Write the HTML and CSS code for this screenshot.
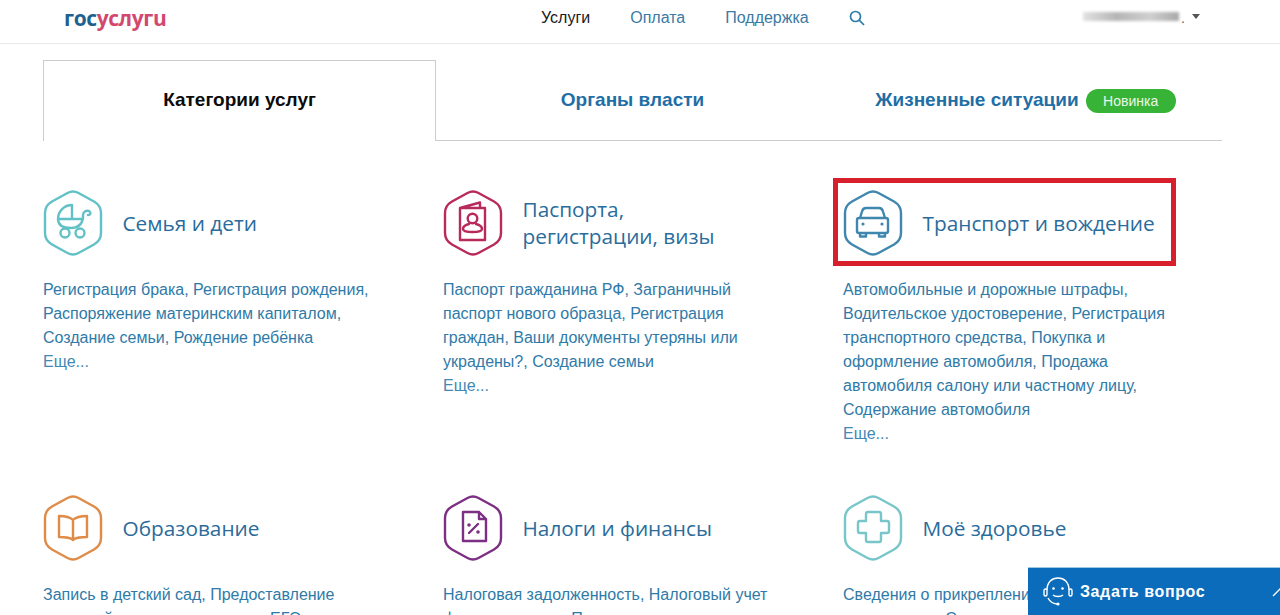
FILE: index.html
```html
<!DOCTYPE html>
<html lang="ru">
<head>
  <meta charset="UTF-8">
  <title>Госуслуги</title>
  <link rel="stylesheet" href="styles.css">
</head>
<body>
  <svg class="defs" width="0" height="0">
    <symbol id="hex" viewBox="0 0 60 66">
      <path d="M24.500 3 Q30 0 35.500 3 L51 11.500 Q58 15.500 58 23 V43 Q58 50.500 51 54.500 L35.500 63 Q30 66 24.500 63 L9 54.500 Q2 50.500 2 43 V23 Q2 15.500 9 11.500 Z"/>
    </symbol>
  </svg>

  <header class="topbar">
    <a href="#" class="logo"><span class="logo-gos">гос</span><span class="logo-usl">услугu</span></a>
    <nav class="topnav">
      <a href="#" class="current">Услуги</a>
      <a href="#">Оплата</a>
      <a href="#">Поддержка</a>
      <a href="#" class="search" aria-label="Поиск">
        <svg width="16" height="16" viewBox="0 0 16 16"><circle cx="6.500" cy="6.500" r="5"/><path d="M10.200 10.200 L15 15"/></svg>
      </a>
    </nav>
    <div class="user"><span class="user-blur"></span><span class="user-dot">.</span><span class="user-arrow"></span></div>
  </header>

  <main class="page">
    <div class="tabs">
      <a href="#" class="tab active">Категории услуг</a>
      <a href="#" class="tab">Органы власти</a>
      <a href="#" class="tab">Жизненные ситуации <span class="badge">Новинка</span></a>
    </div>

    <div class="cats">
      <section class="cat">
        <a href="#" class="cat-head">
          <svg class="icon teal" width="60" height="66" viewBox="0 0 60 66">
            <use href="#hex"/>
            <path d="M29 15 A14 14 0 0 0 15 29 H29 Z M15 29 c0 6 5 9 13 9 c7 0 11 -4 12 -10 V25 c0 -3 3 -5 6 -4 c2 1 2 4 -1 4 M29 29 H40"/>
            <circle cx="22" cy="43" r="4.500"/><circle cx="37" cy="43" r="4.500"/>
          </svg>
          <h3>Семья и дети</h3>
        </a>
        <p class="links"><a href="#">Регистрация брака</a>, <a href="#">Регистрация рождения</a>, <a href="#">Распоряжение материнским капиталом</a>, <a href="#">Создание семьи</a>, <a href="#">Рождение ребёнка</a><br><a href="#" class="more">Еще...</a></p>
      </section>

      <section class="cat">
        <a href="#" class="cat-head">
          <svg class="icon crimson" width="60" height="66" viewBox="0 0 60 66">
            <use href="#hex"/>
            <path d="M17 18 L37 12.500 V18 M17 18 H42 V50 H17 Z"/>
            <circle cx="29.500" cy="28.500" r="4.800"/>
            <path d="M26 34 c-4 1 -6 3 -6 5 c0 2 2 3 9.500 3 c7.500 0 9.500 -1 9.500 -3 c0 -2 -2 -4 -6 -5"/>
          </svg>
          <h3>Паспорта,<br>регистрации, визы</h3>
        </a>
        <p class="links"><a href="#">Паспорт гражданина РФ</a>, <a href="#">Заграничный паспорт нового образца</a>, <a href="#">Регистрация граждан</a>, <a href="#">Ваши документы утеряны или украдены?</a>, <a href="#">Создание семьи</a><br><a href="#" class="more">Еще...</a></p>
      </section>

      <section class="cat">
        <a href="#" class="cat-head">
          <svg class="icon steel" width="60" height="66" viewBox="0 0 60 66">
            <use href="#hex"/>
            <path d="M17 28 L19 21.500 c0.500 -2 2 -3.500 4 -3.500 H36 c2 0 3.500 1.500 4 3.500 L42 28 M16 28 H43 c1 0 2 1 2 2 V41 c0 1 -1 2 -2 2 H16 c-1 0 -2 -1 -2 -2 V30 c0 -1 1 -2 2 -2 Z M17 43 V46.500 H23 V43 M36 43 V46.500 H42 V43"/>
            <circle class="dot" cx="20" cy="34" r="1.600"/><circle class="dot" cx="39" cy="34" r="1.600"/>
          </svg>
          <h3>Транспорт и вождение</h3>
        </a>
        <p class="links"><a href="#">Автомобильные и дорожные штрафы</a>, <a href="#">Водительское удостоверение</a>, <a href="#">Регистрация транспортного средства</a>, <a href="#">Покупка и оформление автомобиля</a>, <a href="#">Продажа автомобиля салону или частному лицу</a>, <a href="#">Содержание автомобиля</a><br><a href="#" class="more">Еще...</a></p>
        <div class="marker"></div>
      </section>

      <section class="cat">
        <a href="#" class="cat-head">
          <svg class="icon amber" width="60" height="66" viewBox="0 0 60 66">
            <use href="#hex"/>
            <path d="M30 25 C27 22 22 21 16 21 V42 C22 42 27 42 30 45 C33 42 38 42 44 42 V21 C38 21 33 22 30 25 Z M30 25 V45"/>
          </svg>
          <h3>Образование</h3>
        </a>
        <p class="links"><a href="#">Запись в детский сад</a>, <a href="#">Предоставление сведений о своих результатах ЕГЭ</a></p>
      </section>

      <section class="cat">
        <a href="#" class="cat-head">
          <svg class="icon purple" width="60" height="66" viewBox="0 0 60 66">
            <use href="#hex"/>
            <path d="M20 17 H36 L43 24 V46 H20 Z M36 17 V24 H43 M26 38 L35 29"/>
            <circle class="dot" cx="26" cy="30" r="1.800"/><circle class="dot" cx="35" cy="37" r="1.800"/>
          </svg>
          <h3>Налоги и финансы</h3>
        </a>
        <p class="links"><a href="#">Налоговая задолженность</a>, <a href="#">Налоговый учет физических лиц</a>, <a href="#">Получение налогового вычета</a></p>
      </section>

      <section class="cat">
        <a href="#" class="cat-head">
          <svg class="icon pale" width="60" height="66" viewBox="0 0 60 66">
            <use href="#hex"/>
            <path d="M25 17 H36 c1 0 2 1 2 2 V26 H44 c1 0 2 1 2 2 V36 c0 1 -1 2 -2 2 H38 V45 c0 1 -1 2 -2 2 H25 c-1 0 -2 -1 -2 -2 V38 H17 c-1 0 -2 -1 -2 -2 V28 c0 -1 1 -2 2 -2 H23 V19 c0 -1 1 -2 2 -2 Z"/>
          </svg>
          <h3>Моё здоровье</h3>
        </a>
        <p class="links"><a href="#">Сведения о прикреплении к медицинской организации</a>, <a href="#">Страховая</a></p>
      </section>
    </div>
  </main>

  <aside class="ask">
    <svg width="32" height="30" viewBox="0 0 32 30">
      <path d="M5 13 C5 5 10 1 16 1 C22 1 27 5 27 13 M6 21 C8 25 12 27 16 27"/>
      <rect x="2" y="12" width="3" height="7" rx="1.500"/><rect x="27" y="12" width="3" height="7" rx="1.500"/>
      <path d="M11 18 C13 20 19 20 21 18"/>
      <circle class="fill" cx="11.500" cy="11.500" r="1.300"/><circle class="fill" cx="20.500" cy="11.500" r="1.300"/>
      <circle class="fill" cx="16" cy="27" r="1.600"/>
    </svg>
    <span class="ask-text">Задать вопрос</span>
    <svg class="ask-chevron" width="20" height="12" viewBox="0 0 20 12"><path d="M2 10 L10 2 L18 10"/></svg>
  </aside>
</body>
</html>
```

FILE: styles.css
```css
html, body {
  height: 100%;
  overflow: hidden;
}
body {
  margin: 0;
  background: #fff;
  font-family: "Liberation Sans", Arial, sans-serif;
  font-size: 16px;
  color: #2f7aa8;
}
a {
  color: inherit;
  text-decoration: none;
}
.defs {
  display: block;
}

/* top bar */
.topbar {
  display: flex;
  align-items: center;
  height: 35px;
  padding: 0 80px 8px 64px;
  border-bottom: 1px solid #e9e9e9;
}
.logo {
  width: 477px;
  font-family: "Open Sans", sans-serif;
  font-size: 21px;
  font-weight: 700;
  letter-spacing: -0.4px;
  line-height: 34px;
}
.logo-gos {
  color: #1c6190;
}
.logo-usl {
  color: #d2486e;
}
.topnav {
  display: flex;
  align-items: center;
  gap: 40px;
  color: #3a7aa3;
}
.topnav .current {
  color: #1a1a1a;
}
.topnav .search {
  display: flex;
}
.search svg {
  fill: none;
  stroke: #2a7cab;
  stroke-width: 1.700;
}
.user {
  display: flex;
  align-items: center;
  margin-left: auto;
  color: #666;
  font-size: 14px;
}
.user-blur {
  width: 96px;
  height: 9px;
  margin-bottom: 2px;
  background: linear-gradient(90deg, #e2e2e2, #b5b5b5 35%, #cfcfcf 70%, #a8a8a8);
  filter: blur(1.500px);
}
.user-dot {
  margin-left: 2px;
}
.user-arrow {
  margin-left: 7px;
  margin-bottom: 2px;
  border-top: 5px solid #555;
  border-left: 4px solid transparent;
  border-right: 4px solid transparent;
}

.page {
  padding: 16px 58px 0 43px;
}

/* tabs */
.tabs {
  display: grid;
  grid-template-columns: repeat(3, 1fr);
  border-bottom: 1px solid #ccc;
}
.tab {
  display: flex;
  justify-content: center;
  align-items: center;
  gap: 7px;
  box-sizing: border-box;
  height: 81px;
  margin-bottom: -1px;
  padding-bottom: 2px;
  font-size: 19px;
  font-weight: 700;
  color: #1f6ea5;
}
.tab.active {
  background: #fff;
  border: 1px solid #ccc;
  border-bottom: 0;
  color: #0b0b0b;
}
.badge {
  display: inline-block;
  width: 90px;
  height: 24px;
  margin-top: 2px;
  border-radius: 12px;
  background: #37b337;
  color: #eaf7ea;
  font-size: 14px;
  font-weight: 400;
  line-height: 24px;
  text-align: center;
}

/* categories */
.cats {
  display: grid;
  grid-template-columns: repeat(3, 400px);
  grid-auto-rows: 305px;
  padding-top: 50px;
  margin-right: -60px;
}
.cat {
  position: relative;
}
.cat-head {
  display: flex;
  align-items: center;
  gap: 19.500px;
  height: 64px;
}
.cat-head h3 {
  margin: 0;
  font-family: "Open Sans", sans-serif;
  font-size: 20.800px;
  font-weight: 400;
  line-height: 27px;
  color: #2a6c9b;
}
.icon {
  flex: none;
  fill: none;
  stroke-width: 2.400;
  stroke-linejoin: round;
  stroke-linecap: round;
}
.icon .dot {
  stroke: none;
}
.teal { stroke: #62c1c6; }
.pale { stroke: #78c6c9; }
.crimson { stroke: #b92a5c; }
.steel { stroke: #3f87ae; }
.steel .dot { fill: #3f87ae; }
.amber { stroke: #e08c48; }
.purple { stroke: #7d2f83; }
.purple .dot { fill: #7d2f83; }

.links {
  margin: 23px 0 0;
  width: 340px;
  line-height: 24px;
}
.more {
  color: #4289b4;
}

/* red annotation box drawn on the screenshot */
.marker {
  position: absolute;
  left: -10px;
  top: -13px;
  width: 333px;
  height: 78px;
  border: 5px solid #d8202c;
}

/* help widget */
.ask {
  position: fixed;
  right: -11px;
  bottom: 0;
  display: flex;
  align-items: center;
  width: 249px;
  height: 47px;
  padding-left: 14px;
  border-top: 1px solid #9ec7e4;
  background: #0b6cbb;
  color: #fff;
  font-weight: 700;
  font-size: 16px;
}
.ask svg {
  fill: none;
  stroke: #fff;
  stroke-width: 1.400;
}
.ask svg .fill {
  fill: #fff;
  stroke: none;
}
.ask-text {
  margin-left: 6px;
  letter-spacing: 0.6px;
}
.ask-chevron {
  margin-left: auto;
}
```
